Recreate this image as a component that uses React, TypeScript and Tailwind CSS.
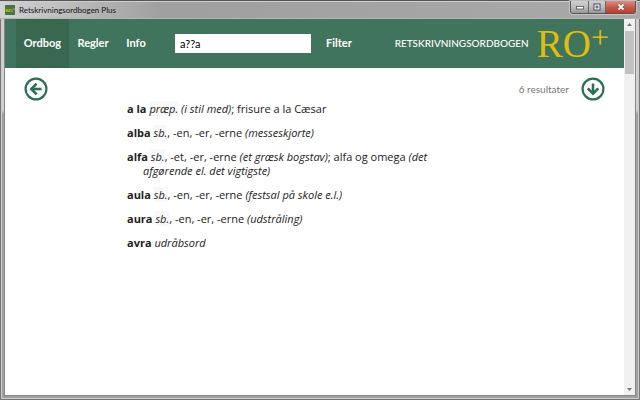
import React, { useState } from "react";

const entries: React.ReactNode[] = [
  <><b>a la</b> <i><Tag>præp.</Tag> (i stil med)</i>; frisure a la Cæsar</>,
  <><b>alba</b> <i><Tag>sb.</Tag></i>, -en, -er, -erne <i>(messeskjorte)</i></>,
  <><b>alfa</b> <i><Tag>sb.</Tag></i>, -et, -er, -erne <i>(et græsk bogstav)</i>; alfa og omega <i>(det afgørende el. det vigtigste)</i></>,
  <><b>aula</b> <i><Tag>sb.</Tag></i>, -en, -er, -erne <i>(festsal på skole e.l.)</i></>,
  <><b>aura</b> <i><Tag>sb.</Tag></i>, -en, -er, -erne <i>(udstråling)</i></>,
  <><b>avra</b> <i>udråbsord</i></>,
];

function Tag({ children }: { children: React.ReactNode }) {
  return <span className="bg-[#f8f8f8]">{children}</span>;
}

function CircleArrow({ down = false }: { down?: boolean }) {
  return (
    <svg viewBox="0 0 24 24" className="size-6" fill="none" stroke="#2a7052" aria-hidden="true">
      <circle cx="12" cy="12" r="10.4" strokeWidth="2.2" />
      <g transform={down ? "rotate(-90 12 12)" : undefined} strokeWidth="2.6">
        <path d="M7.5 12H17.5" />
        <path d="M12.6 6.7L7.3 12L12.6 17.3" />
      </g>
    </svg>
  );
}

function TitleBar() {
  return (
    <div className="flex h-[19px] shrink-0 items-start justify-between border-t border-[#555] bg-linear-to-r from-[#d2d2d2] via-[#a0a0a0] via-25% to-[#a8a8a8] shadow-[inset_0_1px_0_#d0d0d0,inset_0_-1px_0_#b5b5b5]">
      <div className="flex h-[18px] items-center gap-1 pl-[5px]">
        <span className="flex size-[10px] items-center justify-center overflow-hidden bg-[#477347] font-['Liberation_Serif',serif] text-[5px] leading-none font-bold text-[#d5c51b]">RO⁺</span>
        <span className="text-[8px] leading-3 text-[#111]">Retskrivningsordbogen Plus</span>
      </div>
      <div className="mr-1 flex h-[13px] overflow-hidden rounded-b-[3px] border border-t-0 border-[#555] shadow-[0_0_1px_1px_#c8c8c8]">
        <button type="button" aria-label="Minimer" className="flex w-[18px] items-center justify-center border-r border-[#666] bg-linear-to-b from-[#d0d0d0] via-[#bcbcbc] to-[#979797]">
          <svg viewBox="0 0 10 8" className="h-2 w-[10px]" aria-hidden="true"><rect x="1.5" y="3.5" width="7" height="2.5" fill="#fff" stroke="#555" strokeWidth=".8" /></svg>
        </button>
        <button type="button" aria-label="Maksimer" className="flex w-[17px] items-center justify-center border-r border-[#666] bg-linear-to-b from-[#d0d0d0] via-[#bcbcbc] to-[#979797]">
          <svg viewBox="0 0 10 8" className="h-2 w-[10px]" aria-hidden="true"><rect x="2" y="1" width="6" height="6" fill="#fff" stroke="#446" /><rect x="4" y="3" width="2" height="2" fill="#aaa" stroke="#446" strokeWidth=".7" /></svg>
        </button>
        <button type="button" aria-label="Luk" className="flex w-[29px] items-center justify-center bg-linear-to-b from-[#d99084] via-[#c8594a] to-[#bc3d2d]">
          <svg viewBox="0 0 10 8" className="h-2 w-[10px]" aria-hidden="true"><path d="M2.5 1.5l5 5m0-5l-5 5" stroke="#644" strokeWidth="3" /><path d="M2.5 1.5l5 5m0-5l-5 5" stroke="#fff" strokeWidth="1.8" /></svg>
        </button>
      </div>
    </div>
  );
}

function Arrow({ down = false }: { down?: boolean }) {
  return (
    <svg viewBox="0 0 11 12" className="h-3 w-full shrink-0" aria-hidden="true">
      <path d={down ? "M3 5h5L5.5 8z" : "M3 7h5L5.5 4z"} fill="#777" />
    </svg>
  );
}

export default function App() {
  const [query, setQuery] = useState("a??a");
  return (
    <div className="flex h-screen flex-col bg-[#a5a5a5] font-['Lato','Liberation_Sans',sans-serif] text-[#222]">
      <TitleBar />
      <div className="flex min-h-0 grow border-x border-b border-[#777] bg-linear-to-b from-[#d0d0d0] from-24% to-[#a0a0a0] to-25% px-[3px] pb-[3px] shadow-[inset_1px_0_0_#ccc,inset_-1px_0_0_#ccc,inset_0_-1px_0_#ccc]">
        <div className="flex min-w-0 grow border-x border-b border-[#888]">
          <div className="flex min-w-0 grow flex-col bg-white">
            <header className="flex h-[49px] shrink-0 items-center bg-[#40745c] pr-[15px] pl-[11px] text-[11px] font-bold text-white">
              <nav className="flex h-full items-center">
                <a href="#ordbog" className="flex h-full w-[53px] items-center justify-center bg-[#3a674f]">Ordbog</a>
                <a href="#regler" className="w-[48px] text-center">Regler</a>
                <a href="#info" className="w-[38px] text-center">Info</a>
              </nav>
              <input type="text" aria-label="Søg" value={query} onChange={(e) => setQuery(e.target.value)} className="ml-5 h-[19px] w-[136px] bg-white px-[5px] font-normal text-black outline-none" />
              <button type="button" className="ml-[15px]">Filter</button>
              <span className="ml-auto text-[10px] font-medium">RETSKRIVNINGSORDBOGEN</span>
              <span className="ml-2 flex font-['Liberation_Serif',serif] leading-[38px] font-normal text-[#dfbd10]">
                <span className="text-[39px]">RO</span>
                <span className="text-[32px] leading-6">+</span>
              </span>
            </header>
            <main className="grow">
              <div className="flex items-center pt-[9px] pr-[19px] pl-[19px]">
                <button type="button" aria-label="Tilbage"><CircleArrow /></button>
                <p className="mr-3 ml-auto text-[10px] text-[#777]">6 resultater</p>
                <button type="button" aria-label="Ned"><CircleArrow down /></button>
              </div>
              <div className="ml-[122px] flex max-w-[310px] flex-col gap-[10px] pt-px font-['Open_Sans',sans-serif] text-[11px] leading-[14px]">
                {entries.map((entry, i) => (
                  <p key={i} className="pl-4 -indent-4">{entry}</p>
                ))}
              </div>
            </main>
          </div>
          <div className="flex w-[11px] shrink-0 flex-col bg-[#f0f0f0]" aria-hidden="true">
            <Arrow />
            <div className="mx-px h-[43px] bg-[#c1c1c1]" />
            <div className="grow" />
            <Arrow down />
          </div>
        </div>
      </div>
    </div>
  );
}
